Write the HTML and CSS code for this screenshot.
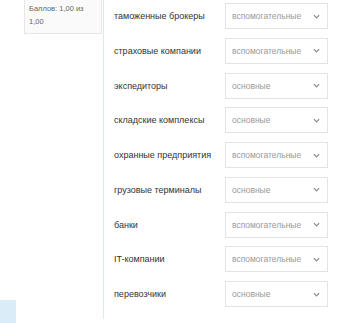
FILE: index.html
```html
<!DOCTYPE html>
<html lang="ru">
<head>
    <meta charset="UTF-8">
    <meta name="viewport" content="width=device-width, initial-scale=1.0">
    <title>Вопрос</title>
    <link rel="stylesheet" href="styles.css">
</head>
<body>
    <div class="page">
        <div class="side">
            <div class="info">Баллов: 1,00 из 1,00</div>
            <div class="nav-block"></div>
        </div>
        <div class="question">
            <div class="row"><span class="label">таможенные брокеры</span><div class="select"><span>вспомогательные</span><svg viewBox="0 0 8 5"><path d="M1 1l3 3 3-3"/></svg></div></div>
            <div class="row"><span class="label">страховые компании</span><div class="select"><span>вспомогательные</span><svg viewBox="0 0 8 5"><path d="M1 1l3 3 3-3"/></svg></div></div>
            <div class="row"><span class="label">экспедиторы</span><div class="select"><span>основные</span><svg viewBox="0 0 8 5"><path d="M1 1l3 3 3-3"/></svg></div></div>
            <div class="row"><span class="label">складские комплексы</span><div class="select"><span>основные</span><svg viewBox="0 0 8 5"><path d="M1 1l3 3 3-3"/></svg></div></div>
            <div class="row"><span class="label">охранные предприятия</span><div class="select"><span>вспомогательные</span><svg viewBox="0 0 8 5"><path d="M1 1l3 3 3-3"/></svg></div></div>
            <div class="row"><span class="label">грузовые терминалы</span><div class="select"><span>основные</span><svg viewBox="0 0 8 5"><path d="M1 1l3 3 3-3"/></svg></div></div>
            <div class="row"><span class="label">банки</span><div class="select"><span>вспомогательные</span><svg viewBox="0 0 8 5"><path d="M1 1l3 3 3-3"/></svg></div></div>
            <div class="row"><span class="label">IT-компании</span><div class="select"><span>вспомогательные</span><svg viewBox="0 0 8 5"><path d="M1 1l3 3 3-3"/></svg></div></div>
            <div class="row"><span class="label">перевозчики</span><div class="select"><span>основные</span><svg viewBox="0 0 8 5"><path d="M1 1l3 3 3-3"/></svg></div></div>
        </div>
    </div>
</body>
</html>
```

FILE: styles.css
```css
body {
    margin: 0;
    padding: 0;
    font-family: "Liberation Sans", Arial, sans-serif;
    background-color: #fff;
    overflow: hidden;
}
.page {
    display: flex;
    min-height: 323px;
}
.side {
    width: 103px;
    display: flex;
    flex-direction: column;
}
.info {
    margin-left: 24px;
    width: 68px;
    padding: 2px 4px 5px 4px;
    border: 1px solid #e6e6e6;
    border-top: none;
    background-color: #fafafa;
    font-size: 7.5px;
    line-height: 13px;
    color: #666;
}
.nav-block {
    margin-top: auto;
    width: 16px;
    height: 23px;
    background-color: #d9ecf7;
}
.question {
    width: 225px;
    align-self: flex-start;
    border-left: 1px solid #d5ebf4;
    padding: 3px 0 12px 10px;
    display: flex;
    flex-direction: column;
    gap: 8.75px;
}
.row {
    display: flex;
    align-items: center;
}
.label {
    width: 111px;
    font-size: 9px;
    color: #333;
    white-space: nowrap;
}
.select {
    width: 88px;
    height: 24px;
    padding: 0 7px 0 6px;
    border: 1px solid #e3e3e3;
    display: flex;
    align-items: center;
    justify-content: space-between;
    font-size: 8.5px;
    color: #9a9a9a;
}
.select svg {
    width: 7px;
    height: 5px;
    fill: none;
    stroke: #8a8a8a;
    stroke-width: 1.4;
}
```
